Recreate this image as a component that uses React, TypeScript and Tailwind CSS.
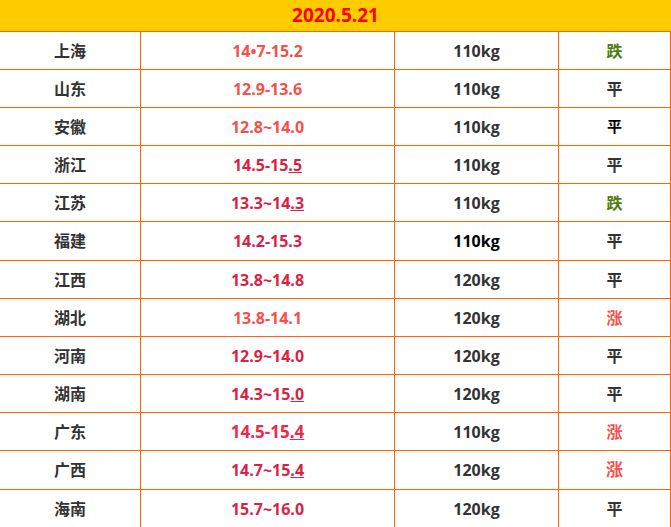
import type { ReactNode } from "react";

interface PriceRow {
  area: string;
  range: ReactNode;
  rangeClass: string;
  weight: string;
  weightClass: string;
  trend: string;
  trendClass: string;
  height: string;
}

const light = "text-[#f5504a]";
const crimson = "text-[#dc1f45]";

const rows: PriceRow[] = [
  { area: "上海", range: "14•7-15.2", rangeClass: light, weight: "110kg", weightClass: "text-[#333]", trend: "跌", trendClass: "text-[#4f7d12]", height: "h-[38px]" },
  { area: "山东", range: "12.9-13.6", rangeClass: light, weight: "110kg", weightClass: "text-[#333]", trend: "平", trendClass: "text-[#333]", height: "h-[38px]" },
  { area: "安徽", range: "12.8~14.0", rangeClass: light, weight: "110kg", weightClass: "text-[#333]", trend: "平", trendClass: "text-black text-[15px]", height: "h-[38px]" },
  { area: "浙江", range: <>14.5-15<u>.5</u></>, rangeClass: crimson, weight: "110kg", weightClass: "text-[#333]", trend: "平", trendClass: "text-[#333]", height: "h-[38px]" },
  { area: "江苏", range: <>13.3~14<u>.3</u></>, rangeClass: crimson, weight: "110kg", weightClass: "text-[#333]", trend: "跌", trendClass: "text-[#4f7d12]", height: "h-[38px]" },
  { area: "福建", range: "14.2-15.3", rangeClass: crimson, weight: "110kg", weightClass: "text-black", trend: "平", trendClass: "text-[#333]", height: "h-[39px]" },
  { area: "江西", range: "13.8~14.8", rangeClass: crimson, weight: "120kg", weightClass: "text-[#333]", trend: "平", trendClass: "text-[#333]", height: "h-[38px]" },
  { area: "湖北", range: "13.8-14.1", rangeClass: light, weight: "120kg", weightClass: "text-[#333]", trend: "涨", trendClass: "text-[#f5504a]", height: "h-[38px]" },
  { area: "河南", range: "12.9~14.0", rangeClass: crimson, weight: "120kg", weightClass: "text-[#333]", trend: "平", trendClass: "text-[#333]", height: "h-[38px]" },
  { area: "湖南", range: <>14.3~15<u>.0</u></>, rangeClass: crimson, weight: "120kg", weightClass: "text-[#333]", trend: "平", trendClass: "text-[#333]", height: "h-[38px]" },
  { area: "广东", range: <>14.5-15<u>.4</u></>, rangeClass: "text-[#f0284a] text-[17px]", weight: "110kg", weightClass: "text-[#333]", trend: "涨", trendClass: "text-[#f5504a]", height: "h-[38px]" },
  { area: "广西", range: <>14.7~15<u>.4</u></>, rangeClass: crimson, weight: "120kg", weightClass: "text-[#333]", trend: "涨", trendClass: "text-[#f5504a] text-[17px]", height: "h-[39px]" },
  { area: "海南", range: "15.7~16.0", rangeClass: crimson, weight: "120kg", weightClass: "text-[#333]", trend: "平", trendClass: "text-[#333]", height: "h-[38px]" },
];

export default function App() {
  return (
    <div
      className="w-[671px] h-[527px] overflow-hidden bg-white font-bold text-[16px]"
      style={{ fontFamily: '"Open Sans", "Noto Sans CJK SC", sans-serif' }}
    >
      <div className="h-[32px] bg-[#ffcc00] border-b border-[#ff6600] flex items-center justify-center text-[19px] text-[#ff0000]">
        2020.5.21
      </div>
      {rows.map((row, index) => (
        <div key={index} className={`${row.height} flex border-b border-[#ff6600]`}>
          <div className="w-[140px] flex items-center justify-center text-[#333]">
            {row.area}
          </div>
          <div className="w-px bg-[#ff6600]" />
          <div className={`w-[253px] flex items-center justify-center ${row.rangeClass}`}>
            <span>{row.range}</span>
          </div>
          <div className="w-px bg-[#ff6600]" />
          <div className={`w-[163px] flex items-center justify-center ${row.weightClass}`}>
            {row.weight}
          </div>
          <div className="w-px bg-[#ff6600]" />
          <div className={`w-[111px] flex items-center justify-center ${row.trendClass}`}>
            {row.trend}
          </div>
          <div className="w-px bg-[#ff6600]" />
        </div>
      ))}
    </div>
  );
}
